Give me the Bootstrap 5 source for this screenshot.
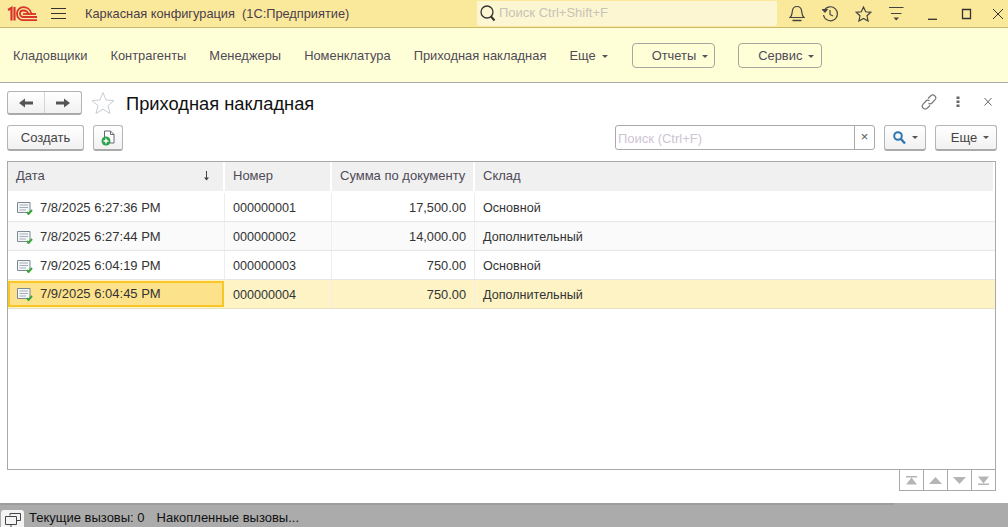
<!doctype html>
<html lang="ru"><head><meta charset="utf-8"><title>Приходная накладная</title>
<link href="https://cdn.jsdelivr.net/npm/bootstrap@5.3.0/dist/css/bootstrap.min.css" rel="stylesheet">
<style>
html,body{height:527px;overflow:hidden}
body{font:13px/16px "Liberation Sans",Arial,sans-serif;color:#333;background:#fff;display:flex;flex-direction:column}
svg{display:block;flex:none}
.titlebar{height:28px;background:#fbe99b;border-bottom:1px solid #c9bb6b;color:#4b3d4c;flex:none}
.logo-slot{width:34px;margin-left:7px}
.burger{width:15px;margin-left:10px;margin-right:19px}
.app-name{width:392px;white-space:pre;font-size:12.800px}
.glob-search{width:300px;height:25px;background:#fdf6d3;border-radius:0 0 3px 3px;color:#c8c3b5;margin-top:-1px;padding-left:3px;gap:3px}
.tb-icons{margin-left:12px;gap:17px}
.winbtns{margin-left:21px;gap:17px}
.secbar{height:55px;background:#ffffd7;border-bottom:1px solid #a9a9a9;flex:none;padding:1px 0 0 13px;color:#4f4a57;font-size:12.900px}
.secbar span.sec{margin-right:23px}
.secbar span.more-sec{margin-right:24px}
.caret-mini{display:inline-block;width:0;height:0;border-left:3px solid transparent;border-right:3px solid transparent;border-top:3px solid #555;vertical-align:2px;margin-left:6px}
.outline-pill{height:25px;border:1px solid #a7a7a0;border-radius:4px;line-height:23px;padding:0 6px 0 19px}
.outline-pill.wide-pill{padding-right:7px}
.formhead{height:42px;padding:8px 7px 0;flex:none}
.navgroup{width:75px;height:24px;border:1px solid #b3b3b3;border-bottom:2px solid #aaa;border-radius:3px;background:linear-gradient(#fff,#f1f1f1)}
.navgroup>div{flex:1;display:flex;align-items:center;justify-content:center}
.navgroup>div+div{border-left:1px solid #d5d5d5}
.form-title{font-size:18.300px;line-height:24px;color:#111;margin:1px 0 0 11px}
.star-slot{margin-left:9px}
.headtools{gap:19px;margin-top:3px;margin-right:5px}
.cmdbar{height:26px;padding:0 11px 0 7px;flex:none}
.onebtn{height:26px;border:1px solid #b5b5b5;border-bottom:2px solid #aaa;border-radius:3px;background:linear-gradient(#fff,#f1f1f1);display:flex;align-items:center;justify-content:center;color:#444}
.create-btn{width:77px}
.add-btn{width:30px;margin-left:9px}
.searchfield{width:260px;height:25px;border:1px solid #aaa;border-radius:3px;margin-left:auto;color:#cdc5d3;line-height:25px;padding-left:2px;position:relative}
.searchfield i{position:absolute;right:0;top:0;bottom:0;width:20px;border-left:1px solid #aaa;color:#555;font-style:normal;text-align:center;line-height:21px}
.find-btn{width:42px;margin-left:9px;gap:6px}
.more-btn{width:62px;margin-left:9px;padding-left:8px}
.gridbox{margin:10px 12px 0 7px;height:309px;border:1px solid #a9a9a9;flex:none;overflow:hidden;font-size:12.600px}
.gridrow{display:grid;grid-template-columns:217px 107px 143px 1fr;height:29px;border-bottom:1px solid #e6e6e6;align-items:stretch}
.gridrow>div{padding:2px 8px 0;display:flex;align-items:center;border-right:1px solid #eee;white-space:nowrap}
.gridrow>div:last-child{border-right:0}
.gridrow.head{height:31px;background:#f0f0f0;color:#4f4a57;border-bottom:2px solid #fff;font-size:13px}
.gridrow.head>div{border-right:2px solid #fff;padding:0 6px 1px 8px}
.gridrow.head svg{margin-right:7px}
.gridrow.alt{background:#fafafa}
.gridrow.current{background:#fdf3c5;border-bottom-color:#e9e3c5}
.gridrow>div.focuscell{background:#fde28c;box-shadow:inset 0 0 0 2px #f9c625;margin:1px 0;padding-top:0;border-right:0;margin-right:1px}
.gridrow .num{justify-content:flex-end;font-size:12.800px}
.stamp{font-size:13px}
.docicon{margin-right:7px;margin-left:1px}
.pager{margin:0 12px 0 0;justify-content:flex-end;flex:none}
.pager>div{height:21px;border:1px solid #a9a9a9;border-top:0;margin-left:-1px;display:flex;align-items:center;justify-content:center;width:25px}
.footstrip{margin-top:auto;height:24px;background:#ababab;flex:none;position:relative;color:#111}
.footstrip::before{content:"";position:absolute;left:0;top:0;width:894px;height:2px;background:#9d9d9d}
.footbtn{width:23px;height:17px;background:#f4f4f4;margin:7px 0 0 1px;border-radius:3px 3px 0 0;display:flex;justify-content:center;padding-top:2px}
.foottext{padding-top:7px;line-height:16px}
.footgap{margin-left:5px;margin-right:12px}
</style></head><body>

<header class="titlebar d-flex align-items-center">
  <div class="logo-slot"><svg width="30" height="16" viewBox="0 0 30 16" fill="none" stroke="#d8342c" stroke-width="1.800"><path d="M1 4 4.500 2V14.500M7.500 1V14.500" stroke-width="2.200"/><path d="M24.500 8C23.500 3 19.500 1.200 16.500 1.200c-4 0-6.500 3-6.500 6.500s2.500 6.500 6 6.500H30"/><path d="M21.500 8.500C20.800 5.500 18.500 4.500 16.500 4.500c-2 0-3.500 1.500-3.500 3.300s1.500 3.200 3.200 3.200H30"/><path d="M16 8H29"/></svg></div>
  <div class="burger"><svg width="15" height="13" viewBox="0 0 15 13" stroke="#333"><path d="M0 1.500H15M0 6.500H15M0 11.500H15"/></svg></div>
  <div class="app-name">Каркасная конфигурация  (1С:Предприятие)</div>
  <div class="glob-search d-flex align-items-center">
    <svg width="16" height="17" viewBox="0 0 16 17" fill="none" stroke="#333"><circle cx="7" cy="7" r="6" stroke-width="1.300"/><path d="M11 11.500 14.500 15.500" stroke-width="2"/></svg>
    <span>Поиск Ctrl+Shift+F</span>
  </div>
  <div class="tb-icons d-flex align-items-center">
    <svg width="16" height="17" viewBox="0 0 16 17" fill="none" stroke="#444" stroke-width="1.200"><path d="M1 12.500c2-1.500 2-3 2.300-6C3.600 3 5.500 1.500 8 1.500s4.400 1.500 4.700 5c.3 3 .3 4.500 2.300 6Z"/><path d="M3.500 15.500H12.500" stroke-width="1.500"/></svg>
    <svg width="16" height="16" viewBox="0 0 16 16" fill="none" stroke="#444" stroke-width="1.200"><path d="M2.200 4.500A7 7 0 1 1 1.500 9"/><path d="M.5 3.500 3 6 5 3.500Z" fill="#444"/><path d="M8 4v4.500l3 1.500"/></svg>
    <svg width="17" height="16" viewBox="0 0 17 16" fill="none" stroke="#444" stroke-width="1.200"><path d="M8.500 1 10.700 5.800 15.800 6.300 12 9.800 13.100 15 8.500 12.400 3.900 15 5 9.800 1.200 6.300 6.300 5.800Z"/></svg>
    <svg width="15" height="15" viewBox="0 0 15 15" stroke="#444" fill="#444"><path d="M0 1.500H14.500M2 7.500H12.500" stroke-width="1.200"/><path d="M4.500 11.500H10L7.200 14.500Z" stroke="none"/></svg>
  </div>
  <div class="winbtns d-flex align-items-center">
    <svg width="16" height="12" viewBox="0 0 16 12" stroke="#333" stroke-width="1.300"><path d="M3 11.300H12"/></svg>
    <svg width="16" height="12" viewBox="0 0 16 12" fill="none" stroke="#333" stroke-width="1.300"><path d="M4.500 1.500H12.500V10.500H4.500Z"/></svg>
    <svg width="14" height="12" viewBox="0 0 14 12" stroke="#333"><path d="M2 1 12 11M12 1 2 11"/></svg>
  </div>
</header>

<nav class="secbar d-flex align-items-center">
  <span class="sec">Кладовщики</span><span class="sec">Контрагенты</span><span class="sec">Менеджеры</span><span class="sec">Номенклатура</span><span class="sec">Приходная накладная</span>
  <span class="sec more-sec">Еще<span class="caret-mini"></span></span>
  <span class="outline-pill sec">Отчеты<span class="caret-mini"></span></span>
  <span class="outline-pill wide-pill">Сервис<span class="caret-mini"></span></span>
</nav>

<div class="formhead d-flex align-items-start">
  <div class="navgroup d-flex">
    <div><svg width="15" height="10" viewBox="0 0 15 10" fill="#555"><path d="M0 5 6 .5V3.500H14V6.500H6V9.500Z"/></svg></div>
    <div><svg width="15" height="10" viewBox="0 0 15 10" fill="#555"><path d="M14 5 8 .5V3.500H0V6.500H8V9.500Z"/></svg></div>
  </div>
  <div class="star-slot"><svg width="24" height="24" viewBox="0 0 24 24" fill="#fff" stroke="#c9ccd2"><path d="M12 1.500 15 9 23 9.500 17 14.700 19 22.500 12 18.200 5 22.500 7 14.700 1 9.500 9 9Z"/></svg></div>
  <div class="form-title">Приходная накладная</div>
  <div class="headtools ms-auto d-flex align-items-center">
    <svg width="16" height="16" viewBox="0 0 16 16" fill="none" stroke="#777" stroke-width="1.200"><path d="M7 4.500 9.800 1.800a2.600 2.600 0 0 1 3.900 0 2.800 2.800 0 0 1 .4 3.900L11 9c-1 1-2.500 1-3.500.2"/><path d="M9 11.500 6.200 14.200a2.600 2.600 0 0 1-3.900 0 2.800 2.800 0 0 1-.4-3.900L5 7c1-1 2.500-1 3.500-.2"/></svg>
    <svg width="4" height="12" viewBox="0 0 4 12" fill="#666"><rect x="0.500" y="0.500" width="3" height="2.500"/><rect x="0.500" y="4.500" width="3" height="2.500"/><rect x="0.500" y="8.500" width="3" height="2.500"/></svg>
    <svg width="17" height="10" viewBox="0 0 17 10" stroke="#666"><path d="M5.500 1 12.500 8.500M12.500 1 5.500 8.500"/></svg>
  </div>
</div>

<div class="cmdbar d-flex">
  <div class="onebtn create-btn">Создать</div>
  <div class="onebtn add-btn"><svg width="14" height="16" viewBox="0 0 14 16"><path d="M3.500 1H9.500L13 4.500V13H3.500Z" fill="#fff" stroke="#667"/><path d="M9.500 1V4.500H13" fill="none" stroke="#667"/><circle cx="5" cy="11" r="4.500" fill="#2ca24a"/><path d="M5 8.500V13.500M2.500 11H7.500" stroke="#fff" stroke-width="1.400"/></svg></div>
  <div class="searchfield">Поиск (Ctrl+F)<i>×</i></div>
  <div class="onebtn find-btn"><svg width="13" height="14" viewBox="0 0 13 14" fill="none" stroke="#2f75b0"><circle cx="5" cy="5" r="3.800" stroke-width="2"/><path d="M8 8 12 12.500" stroke-width="2.400"/></svg><span class="caret-mini m-0"></span></div>
  <div class="onebtn more-btn">Еще<span class="caret-mini"></span></div>
</div>

<div class="gridbox">
  <div class="gridrow head"><div class="justify-content-between">Дата<svg width="7" height="10" viewBox="0 0 7 10" fill="#444" stroke="#444"><path d="M3.500 0V8" fill="none"/><path d="M1 6.500H6L3.500 9.500Z" stroke="none"/></svg></div><div>Номер</div><div>Сумма по документу</div><div>Склад</div></div>
  <div class="gridrow"><div class="stamp"><svg class="docicon" width="16" height="13" viewBox="0 0 16 13"><path d="M.5 .5H13V10.500H.5Z" fill="#f4f6f8" stroke="#7a8894"/><path d="M2.500 3H11M2.500 5.500H11M2.500 8H9" stroke="#a3adb5"/><path d="M10 10 11.500 12 15 8" fill="none" stroke="#3aa63a" stroke-width="2"/></svg>7/8/2025 6:27:36 PM</div><div>000000001</div><div class="num">17,500.00</div><div>Основной</div></div>
  <div class="gridrow alt"><div class="stamp"><svg class="docicon" width="16" height="13" viewBox="0 0 16 13"><path d="M.5 .5H13V10.500H.5Z" fill="#f4f6f8" stroke="#7a8894"/><path d="M2.500 3H11M2.500 5.500H11M2.500 8H9" stroke="#a3adb5"/><path d="M10 10 11.500 12 15 8" fill="none" stroke="#3aa63a" stroke-width="2"/></svg>7/8/2025 6:27:44 PM</div><div>000000002</div><div class="num">14,000.00</div><div>Дополнительный</div></div>
  <div class="gridrow"><div class="stamp"><svg class="docicon" width="16" height="13" viewBox="0 0 16 13"><path d="M.5 .5H13V10.500H.5Z" fill="#f4f6f8" stroke="#7a8894"/><path d="M2.500 3H11M2.500 5.500H11M2.500 8H9" stroke="#a3adb5"/><path d="M10 10 11.500 12 15 8" fill="none" stroke="#3aa63a" stroke-width="2"/></svg>7/9/2025 6:04:19 PM</div><div>000000003</div><div class="num">750.00</div><div>Основной</div></div>
  <div class="gridrow current"><div class="stamp focuscell"><svg class="docicon" width="16" height="13" viewBox="0 0 16 13"><path d="M.5 .5H13V10.500H.5Z" fill="#f4f6f8" stroke="#7a8894"/><path d="M2.500 3H11M2.500 5.500H11M2.500 8H9" stroke="#a3adb5"/><path d="M10 10 11.500 12 15 8" fill="none" stroke="#3aa63a" stroke-width="2"/></svg>7/9/2025 6:04:45 PM</div><div>000000004</div><div class="num">750.00</div><div>Дополнительный</div></div>
</div>
<div class="pager d-flex">
  <div><svg width="13" height="9" viewBox="0 0 13 9" fill="#b5b5b5"><path d="M1 0H12V1.500H1ZM6.500 1.500 12 8.500H1Z"/></svg></div>
  <div><svg width="13" height="7" viewBox="0 0 13 7" fill="#b5b5b5"><path d="M6.500 0 13 7H0Z"/></svg></div>
  <div><svg width="13" height="7" viewBox="0 0 13 7" fill="#b5b5b5"><path d="M6.500 7 13 0H0Z"/></svg></div>
  <div><svg width="13" height="9" viewBox="0 0 13 9" fill="#b5b5b5"><path d="M1 7.500H12V9H1ZM6.500 7.500 12 .5H1Z"/></svg></div>
</div>

<footer class="footstrip d-flex">
  <div class="footbtn"><svg width="16" height="15" viewBox="0 0 16 15" fill="none" stroke="#444"><path d="M5 3.500V1.500H15.500V8.500H12"/><path d="M.5 4.500H11.500V12.500H.5Z"/><path d="M6 12.500V15"/></svg></div>
  <div class="foottext footgap">Текущие вызовы: 0</div>
  <div class="foottext">Накопленные вызовы...</div>
</footer>
</body></html>
